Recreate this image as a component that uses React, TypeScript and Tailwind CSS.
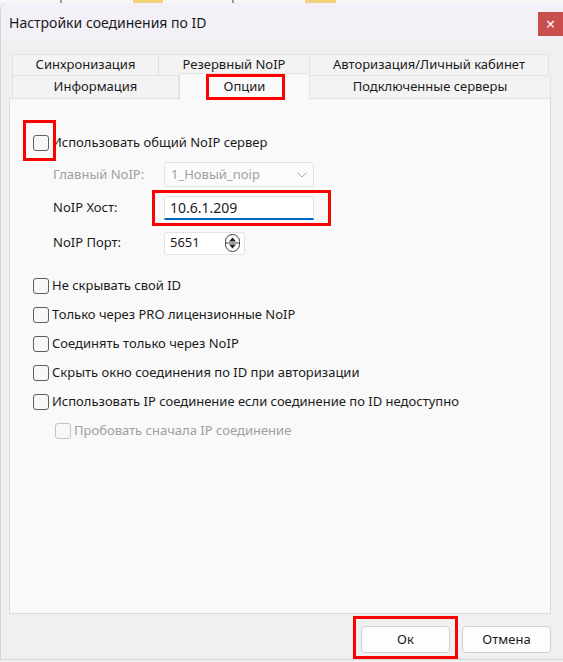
import React from "react";

function CheckBox({ disabled = false }: { disabled?: boolean }) {
  return (
    <span
      className={
        "block w-[16px] h-[16px] rounded-[3px] border bg-[#f7f7f7] shrink-0 " +
        (disabled ? "border-[#c4c4c4]" : "border-[#5f5f5f]")
      }
    />
  );
}

function CheckRow({ label, disabled = false, indent = false }: { label: string; disabled?: boolean; indent?: boolean }) {
  return (
    <div className={"h-[29px] flex items-center gap-[3px] " + (indent ? "pl-[45px]" : "pl-[23px]")}>
      <CheckBox disabled={disabled} />
      <span className={disabled ? "text-[#a0a0a0]" : "text-[#1b1b1b]"}>{label}</span>
    </div>
  );
}

function SpinIcon() {
  return (
    <svg width="15" height="18" viewBox="0 0 15 18">
      <rect x="0.5" y="0.5" width="14" height="17" rx="7" fill="#fff" stroke="#3c3c3c" />
      <line x1="1" y1="9" x2="14" y2="9" stroke="#3c3c3c" />
      <path d="M7.5 3.5 L11 7.5 L4 7.5 Z" fill="#1f1f1f" />
      <path d="M7.5 14.5 L11 10.5 L4 10.5 Z" fill="#1f1f1f" />
    </svg>
  );
}

export default function App() {
  return (
    <div
      className="w-[563px] h-[662px] bg-[#f0f0f0] relative overflow-hidden text-[13px]"
      style={{ fontFamily: '"Noto Sans", "Open Sans", sans-serif' }}
    >
      {/* desktop strip behind window */}
      <div className="h-[3px] bg-[#f7f7f7] flex">
        <span className="ml-[60px] w-[2px] bg-[#9a9a9a]" />
        <span className="ml-[71px] w-[30px] bg-[#f2d27a]" />
        <span className="ml-[69px] w-[2px] bg-[#9a9a9a]" />
        <span className="ml-[71px] w-[31px] bg-[#f2d27a]" />
      </div>

      <div className="h-[657px] border-l border-b border-[#d4d4d4] rounded-tl-[8px] flex flex-col">
        {/* title bar */}
        <div className="h-[37px] bg-[#f3f0f8] flex items-start justify-between rounded-tl-[8px]">
          <span className="pl-[8px] pt-[9px] text-[14px] text-[#1a1a1a]">Настройки соединения по ID</span>
          <div className="mt-[9px] w-[25px] h-[24px] bg-[#c94f4f] flex items-center justify-center text-white text-[16px] leading-none">
            ×
          </div>
        </div>

        {/* body */}
        <div className="flex-1 flex flex-col pt-[14px]">
          <div className="ml-[11px] flex h-[22px] text-[#1b1b1b]">
            <div className="w-[147px] border border-[#e2e2e2] bg-[#f3f3f3] flex items-center justify-center">Синхронизация</div>
            <div className="w-[151px] border border-l-0 border-[#e2e2e2] bg-[#f3f3f3] flex items-center justify-center">Резервный NoIP</div>
            <div className="w-[239px] border border-l-0 border-[#e2e2e2] bg-[#f3f3f3] flex items-center justify-center">Авторизация/Личный кабинет</div>
          </div>
          <div className="ml-[11px] flex items-end h-[23px] -mb-px relative z-10 text-[#1b1b1b]">
            <div className="w-[167px] h-[23px] border border-t-0 border-[#e2e2e2] bg-[#f3f3f3] flex items-center justify-center">Информация</div>
            <div className="relative w-[131px] h-[26px] border border-b-0 border-[#e2e2e2] bg-[#f9f9f9] flex items-center justify-center">
              Опции
              <span className="absolute left-[26px] top-[0px] w-[79px] h-[26px] border-[3px] border-[#ff0000]" />
            </div>
            <div className="w-[241px] h-[23px] border border-t-0 border-l-0 border-[#e2e2e2] bg-[#f3f3f3] flex items-center justify-center">Подключенные серверы</div>
          </div>

          {/* panel */}
          <div className="ml-[8px] w-[542px] h-[516px] border border-[#dcdcdc] bg-[#f9f9f9] pt-[35px]">
            <div className="relative h-[18px] flex items-center gap-[3px] pl-[23px] text-[#1b1b1b]">
              <CheckBox />
              <span>Использовать общий NoIP сервер</span>
              <span className="absolute left-[13px] top-[-14px] w-[33px] h-[41px] border-[3px] border-[#ff0000]" />
            </div>

            <div className="mt-[10px] pl-[43px] flex items-center h-[25px]">
              <span className="w-[111px] text-[#a0a0a0]">Главный NoIP:</span>
              <div className="w-[150px] h-[25px] border border-[#e3e3e3] rounded-[3px] bg-[#fbfbfb] flex items-center justify-between pl-[6px] pr-[6px] text-[#a0a0a0]">
                <span>1_Новый_noip</span>
                <svg width="10" height="6" viewBox="0 0 10 6">
                  <path d="M0.5 0.5 L5 5 L9.5 0.5" fill="none" stroke="#a8a8a8" strokeWidth="1" />
                </svg>
              </div>
            </div>

            <div className="mt-[9px] pl-[43px] flex items-center h-[24px]">
              <span className="w-[111px] text-[#1b1b1b]">NoIP Хост:</span>
              <div className="relative w-[150px] h-[24px] border border-[#e3e3e3] border-b-2 border-b-[#0067c0] rounded-t-[3px] bg-white flex items-center pl-[5px] text-[14px] text-[#1b1b1b]">
                10.6.1.209
                <span className="absolute left-[-13px] top-[-7px] w-[179px] h-[36px] border-[3px] border-[#ff0000]" />
              </div>
            </div>

            <div className="mt-[12px] pl-[43px] flex items-center h-[22px]">
              <span className="w-[111px] text-[#1b1b1b]">NoIP Порт:</span>
              <div className="w-[81px] h-[23px] border border-[#e3e3e3] rounded-[3px] bg-white flex items-center justify-between pl-[5px] pr-[4px] text-[#1b1b1b]">
                <span>5651</span>
                <SpinIcon />
              </div>
            </div>

            <div className="mt-[17px] flex flex-col">
              <CheckRow label="Не скрывать свой ID" />
              <CheckRow label="Только через PRO лицензионные NoIP" />
              <CheckRow label="Соединять только через NoIP" />
              <CheckRow label="Скрыть окно соединения по ID при авторизации" />
              <CheckRow label="Использовать IP соединение если соединение по ID недоступно" />
              <CheckRow label="Пробовать сначала IP соединение" disabled indent />
            </div>
          </div>

          {/* buttons */}
          <div className="flex justify-end gap-[12px] pr-[12px] mt-[12px]">
            <div className="relative">
              <button className="w-[89px] h-[27px] rounded-[4px] border border-[#d0d0d0] bg-[#fdfdfd] text-[#1b1b1b]">Ок</button>
              <span className="absolute left-[-8px] top-[-10px] w-[105px] h-[43px] border-[3px] border-[#ff0000]" />
            </div>
            <button className="w-[89px] h-[27px] rounded-[4px] border border-[#d0d0d0] bg-[#fdfdfd] text-[#1b1b1b]">Отмена</button>
          </div>
        </div>
      </div>
    </div>
  );
}
